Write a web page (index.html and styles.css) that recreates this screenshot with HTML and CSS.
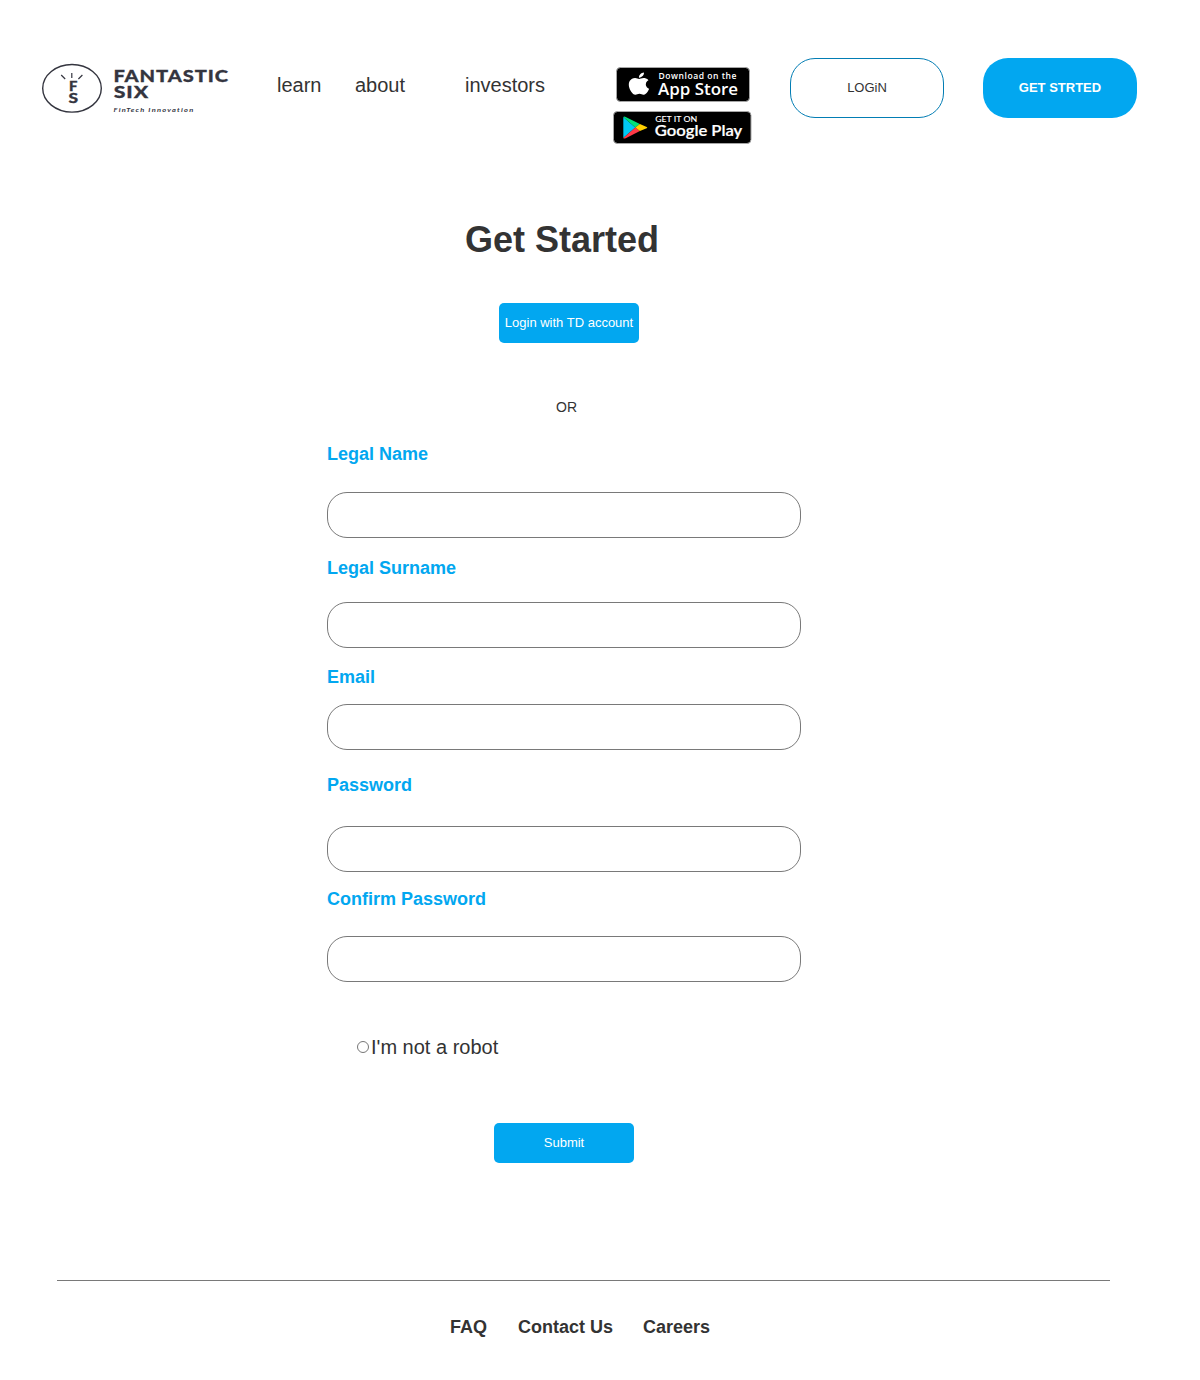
FILE: index.html
```html
<!DOCTYPE html>
<html>
  <head>
    <meta charset="utf-8">
    <title>Get Started</title>
    <link rel="stylesheet" href="styles.css">
  </head>
  <body>
    <header class="header">
      <svg class="logo" width="190" height="54" viewBox="40 61 190 54">
        <ellipse cx="72" cy="88.3" rx="29.3" ry="23.8" fill="none" stroke="#34353f" stroke-width="1.4"/>
        <path d="M71.8 73v5M61.2 75l4 4M82.4 75l-4 4" stroke="#34353f" stroke-width="1.2"/>
        <g class="logo-text">
          <text x="68.9" y="91" font-size="12.5" textLength="8.4" lengthAdjust="spacingAndGlyphs">F</text>
          <text x="68.4" y="103.2" font-size="12.5" textLength="9.6" lengthAdjust="spacingAndGlyphs">S</text>
          <text class="logo-name" x="113.5" y="82.2" font-size="17.5" textLength="115.5" lengthAdjust="spacingAndGlyphs">FANTASTIC</text>
          <text class="logo-name" x="113.7" y="98" font-size="17.5" textLength="35.5" lengthAdjust="spacingAndGlyphs">SIX</text>
        </g>
        <text class="logo-tag" x="113.5" y="111.6" font-size="6" textLength="81" lengthAdjust="spacingAndGlyphs">FinTech Innovation</text>
      </svg>
      <nav class="nav">
        <a class="nav-learn">learn</a>
        <a class="nav-about">about</a>
        <a>investors</a>
      </nav>
      <div class="stores">
        <svg width="134" height="35" viewBox="616 67 134 35">
          <rect x="616.5" y="67.5" width="133" height="34" rx="4" stroke="#a6a6a6"/>
          <path fill="#fff" transform="translate(626.5 72.6) scale(1.04 .92)" d="M12.152 6.896c-.948 0-2.415-1.078-3.96-1.04-2.04.027-3.91 1.183-4.961 3.014-2.117 3.675-.546 9.103 1.519 12.09 1.013 1.454 2.208 3.09 3.792 3.039 1.52-.065 2.09-.987 3.935-.987 1.831 0 2.35.987 3.96.948 1.637-.026 2.676-1.48 3.676-2.948 1.156-1.688 1.636-3.325 1.662-3.415-.039-.013-3.182-1.221-3.22-4.857-.026-3.04 2.48-4.494 2.597-4.559-1.429-2.09-3.623-2.324-4.39-2.376-2-.156-3.675 1.09-4.61 1.09zM15.53 3.83c.843-1.012 1.4-2.427 1.245-3.83-1.207.052-2.662.805-3.532 1.818-.78.896-1.454 2.338-1.273 3.714 1.338.104 2.715-.688 3.559-1.701"/>
          <text class="apple-text apple-small" x="658.5" y="79" font-size="8" textLength="78.5" lengthAdjust="spacingAndGlyphs">Download on the</text>
          <text class="apple-text" x="658" y="94.5" font-size="16" textLength="80" lengthAdjust="spacingAndGlyphs">App Store</text>
        </svg>
        <svg width="139" height="33" viewBox="613 111 139 33">
          <rect x="613.5" y="111.5" width="137.5" height="32" rx="4" stroke="#a6a6a6"/>
          <path fill="#00c8f5" d="M623.3 117v21l12-10.5z"/>
          <path fill="#00e07a" d="M623.3 117q.8-1 2.4-.1l14.2 7.2-4.6 3.4z"/>
          <path fill="#ff3a48" d="M623.3 138q.8 1 2.4.2l14.2-7.2-4.6-3.5z"/>
          <path fill="#ffd000" d="M639.9 124.1l6.8 2.8q1.3.7 0 1.4l-6.8 2.7-4.6-3.5z"/>
          <text class="google-text" x="655.2" y="122" font-size="7.2" textLength="42" lengthAdjust="spacingAndGlyphs">GET IT ON</text>
          <text class="google-text google-name" x="654.8" y="136" font-size="15" textLength="87.5" lengthAdjust="spacingAndGlyphs">Google Play</text>
        </svg>
      </div>
      <button class="pill login">LOGiN</button>
      <button class="pill start">GET STRTED</button>
    </header>

    <main>
      <h1>Get Started</h1>
      <button class="btn btn-td">Login with TD account</button>
      <div class="or">OR</div>
      <form class="form">
        <div class="field name">
          <label for="name">Legal Name</label>
          <input type="text" id="name">
        </div>
        <div class="field surname">
          <label for="surname">Legal Surname</label>
          <input type="text" id="surname">
        </div>
        <div class="field email">
          <label for="email">Email</label>
          <input type="text" id="email">
        </div>
        <div class="field password">
          <label for="password">Password</label>
          <input type="password" id="password">
        </div>
        <div class="field confirm">
          <label for="confirm">Confirm Password</label>
          <input type="password" id="confirm">
        </div>
        <label class="robot"><input type="radio">I'm not a robot</label>
        <button type="button" class="btn btn-submit">Submit</button>
      </form>
    </main>

    <footer class="footer">
      <a class="faq">FAQ</a>
      <a>Contact Us</a>
      <a>Careers</a>
    </footer>
  </body>
</html>
```

FILE: styles.css
```css
* {
  box-sizing: border-box;
}
body {
  margin: 0;
  background: #fff;
  color: #333;
  font-family: "Liberation Sans", Arial, sans-serif;
}
button {
  font-family: inherit;
  font-size: 13px;
  color: #fff;
  padding: 0 0 2px;
  border: none;
}
svg {
  display: block;
}

/* header */
.header {
  display: flex;
  align-items: flex-start;
  padding: 58px 0 0 40px;
  height: 144px;
}
.logo {
  margin-top: 3px;
}
.logo-text {
  font-family: Lato, sans-serif;
  font-weight: 900;
  fill: #34353f;
  stroke: #34353f;
  stroke-width: 0.3px;
}
.logo-name {
  letter-spacing: 0.8px;
}
.logo-tag {
  font-family: Lato, sans-serif;
  font-weight: 700;
  font-style: italic;
  letter-spacing: 1px;
  fill: #34353f;
}
.nav {
  display: flex;
  width: 336px;
  margin-left: 47px;
  padding-top: 16px;
  font-size: 20px;
  line-height: 23px;
}
.nav-learn {
  width: 78px;
}
.nav-about {
  width: 110px;
}
.stores {
  display: flex;
  flex-direction: column;
  gap: 9px;
  width: 139px;
  padding-top: 9px;
}
.stores svg:first-child {
  margin-left: 3px;
}
.apple-text {
  font-family: "Open Sans", sans-serif;
  font-weight: 600;
  fill: #fff;
}
.apple-small {
  letter-spacing: 0.5px;
}
.google-text {
  font-family: Lato, sans-serif;
  font-weight: 600;
  fill: #fff;
}
.google-name {
  stroke: #fff;
  stroke-width: 0.2px;
}
.pill {
  width: 154px;
  height: 60px;
  border-radius: 25px;
}
.login {
  margin-left: 38px;
  background: #fff;
  border: 1px solid #027db4;
  color: #333;
}
.start {
  margin-left: 39px;
  background: #02a7f0;
  font-weight: bold;
}

/* form */
h1 {
  margin: 75px 0 0 465px;
  font-size: 36px;
  line-height: 41px;
}
.btn {
  display: block;
  width: 140px;
  height: 40px;
  background: #02a7f0;
  border-radius: 5px;
}
.btn-td {
  margin: 43px 0 0 499px;
}
.or {
  margin: 56px 0 0 556px;
  font-size: 14px;
  line-height: 16px;
}
.form {
  width: 474px;
  margin: 29px 0 0 327px;
}
.field {
  display: flex;
  flex-direction: column;
  gap: 28px;
  margin-bottom: 20px;
}
.field label {
  font-size: 18px;
  font-weight: bold;
  line-height: 20px;
  color: #02a7f0;
}
.field input {
  height: 46px;
  padding: 2px 20px;
  border: 1px solid #797979;
  border-radius: 20px;
}
.surname {
  gap: 24px;
  margin-bottom: 19px;
}
.email {
  gap: 17px;
  margin-bottom: 25px;
}
.password {
  gap: 31px;
  margin-bottom: 17px;
}
.confirm {
  gap: 27px;
  margin-bottom: 54px;
}
.robot {
  display: flex;
  align-items: center;
  margin-left: 30px;
  font-size: 20px;
  line-height: 23px;
}
.robot input {
  width: 12px;
  height: 12px;
  margin: 0 2px 1px 0;
}
.btn-submit {
  margin: 64px 0 0 167px;
}

/* footer */
.footer {
  display: flex;
  gap: 30px;
  width: 1053px;
  margin: 117px 0 0 57px;
  padding: 36px 0 0 393px;
  border-top: 1px solid #797979;
  font-size: 18px;
  font-weight: bold;
  line-height: 21px;
}
.faq {
  width: 38px;
}
```
